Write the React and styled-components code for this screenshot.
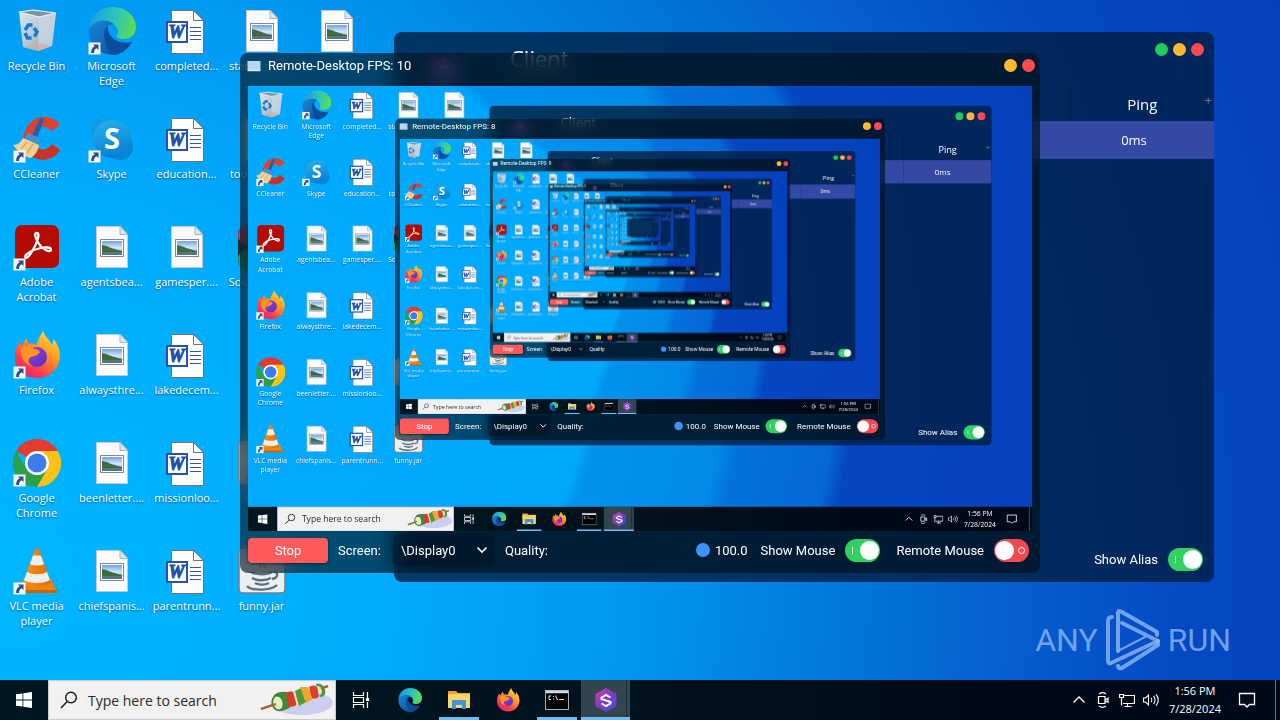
import React from "react";
import styled, { createGlobalStyle, css } from "styled-components";

const UI = `"Open Sans", "Noto Sans", sans-serif`;
const APP = `Roboto, "Liberation Sans", sans-serif`;
const SCREEN_SCALE = 0.6125;
const MAX_DEPTH = 7;
const FPS = [10, 8, 9];

const GlobalStyle = createGlobalStyle`
  *, *::before, *::after { box-sizing: border-box; }
  body { margin: 0; background: #0aa0f5; overflow: hidden; }
  button, input, select { font: inherit; color: inherit; margin: 0; }
`;

/* ---------- drawings ---------- */

const HiddenDefs = styled.svg`
  position: absolute;
  width: 0;
  height: 0;
`;

const Drawing = styled.svg`
  display: block;
  flex: none;
  width: ${(p) => p.$w}px;
  height: ${(p) => p.$h || p.$w}px;
`;

const Icon = ({ name, w, h, box = "0 0 48 48", ...rest }) => (
  <Drawing $w={w} $h={h} viewBox={box} aria-hidden="true" {...rest}>
    <use href={`#${name}`} width={box.split(" ")[2]} height={box.split(" ")[3]} />
  </Drawing>
);

const IconLibrary = () => (
  <HiddenDefs aria-hidden="true">
    <defs>
      <linearGradient id="gBin" x1="0" y1="0" x2="1" y2="1">
        <stop offset="0" stopColor="#dbe9f2" />
        <stop offset=".6" stopColor="#aebfcc" />
        <stop offset="1" stopColor="#8fa3b2" />
      </linearGradient>
      <linearGradient id="gEdgeTop" x1="0" y1=".4" x2="1" y2=".6">
        <stop offset="0" stopColor="#1b9de0" />
        <stop offset=".5" stopColor="#2bc3c0" />
        <stop offset="1" stopColor="#62dc4c" />
      </linearGradient>
      <linearGradient id="gEdgeLow" x1="0" y1="0" x2="1" y2="1">
        <stop offset="0" stopColor="#1a86dc" />
        <stop offset="1" stopColor="#0b4fa0" />
      </linearGradient>
      <linearGradient id="gSkype" x1="0" y1="0" x2=".3" y2="1">
        <stop offset="0" stopColor="#26b4ee" />
        <stop offset="1" stopColor="#0a82d4" />
      </linearGradient>
      <linearGradient id="gFox" x1=".9" y1="0" x2=".2" y2="1">
        <stop offset="0" stopColor="#ffe94a" />
        <stop offset=".4" stopColor="#ff9a1f" />
        <stop offset=".75" stopColor="#ff3b4e" />
        <stop offset="1" stopColor="#e3207c" />
      </linearGradient>
      <linearGradient id="gFoxCore" x1="0" y1="0" x2="1" y2="1">
        <stop offset="0" stopColor="#9a3fe0" />
        <stop offset="1" stopColor="#5631b8" />
      </linearGradient>
      <linearGradient id="gHex" x1="0" y1="0" x2="1" y2="1">
        <stop offset="0" stopColor="#d43fae" />
        <stop offset=".5" stopColor="#7e3cc0" />
        <stop offset="1" stopColor="#3b50d8" />
      </linearGradient>
      <linearGradient id="gPhoto" x1="0" y1="0" x2="0" y2="1">
        <stop offset="0" stopColor="#6fa3e8" />
        <stop offset=".5" stopColor="#d7e8f6" />
        <stop offset="1" stopColor="#5f7f96" />
      </linearGradient>
      <linearGradient id="gCone" x1="0" y1="0" x2="1" y2="0">
        <stop offset="0" stopColor="#ff9418" />
        <stop offset="1" stopColor="#e06a00" />
      </linearGradient>

      <symbol id="shortcut" viewBox="0 0 48 48">
        <rect x="0.5" y="35.500" width="12" height="12" fill="#f4f6f8" />
        <path d="M5 37.500h5.500v5.500l-1.800-1.800c-2 1-2.700 2.300-2.700 4.800H3.200c0-3.500 1-5.600 3.600-6.700z" fill="#2b4c8c" />
      </symbol>

      <symbol id="bin" viewBox="0 0 48 48">
        <path d="M6 5l14-2 23 3-4 33-14 5-15-4z" fill="url(#gBin)" />
        <path d="M26 9l17-3-4 33-14 5z" fill="#c9d8e3" opacity=".75" />
        <path d="M6 5l14-2 23 3-17 4z" fill="#7f95a5" stroke="#eef5fa" strokeWidth="1.200" />
        <path d="M10 40l15 4 13-5-10-3z" fill="#dba596" opacity=".6" />
        <g fill="none" stroke="#1779cf" strokeWidth="3.600">
          <path d="M12 23l3.500-5h4" />
          <path d="M21 21l3 4-2.500 4.500" />
          <path d="M18.500 31h-4l-2.500-5" />
        </g>
      </symbol>

      <symbol id="edge" viewBox="0 0 48 48">
        <path d="M1 22C2 9 12 0 24.500 0 38 0 48 9 48 20c0 8-6 12-12.500 12-5 0-7.500-1.800-6.500-3.500 2-3 1.500-6-1-9C22 13 9 12 1 22z" fill="url(#gEdgeTop)" />
        <path d="M1 22c6-10 19-10.500 25-4.500-5-1-10 3-10 10 0 10 8 19 15 19.500C15 51-1 39 1 22z" fill="url(#gEdgeLow)" />
        <path d="M16 27c0-4 2-7 4-8.500-1 10 8 20 24 16.500C39 44 31 48 25 48 20 44 16 36 16 27z" fill="#0c4c9c" />
      </symbol>

      <symbol id="ccleaner" viewBox="0 0 48 48">
        <path d="M47 10C40 0 25-1 17 8 7 19 9 36 20 42c9 5 21 3 27-7l-8-6c-4 6-10 7-14 4-6-4-7-13-2-18s12-4 15 1z" fill="#e0402c" />
        <path d="M20 42c9 5 21 3 27-7l-8-6c-4 6-10 7-14 4z" fill="#b92a20" opacity=".6" />
        <path d="M27 3l4 1-8 22-5-3z" fill="#1e62a8" />
        <path d="M15 18l12 5-2 8-14-6z" fill="#3d93d6" />
        <path d="M0 30c5 0 8-3 10-7l16 7c-1 6-4 10-8 13-6-1-12-5-18-13z" fill="#f3d196" />
        <path d="M8 34l6-7M14 38l6-9" stroke="#d8aa60" strokeWidth="1.500" />
      </symbol>

      <symbol id="skype" viewBox="0 0 48 48">
        <circle cx="16" cy="16" r="13" fill="#1598e0" />
        <circle cx="32" cy="32" r="13" fill="#0b84d2" />
        <circle cx="24" cy="24" r="19" fill="url(#gSkype)" />
        <text x="24" y="34" fontFamily="Open Sans, sans-serif" fontWeight="700" fontSize="29" textAnchor="middle" fill="#fff">S</text>
      </symbol>

      <symbol id="word" viewBox="0 0 48 48">
        <path d="M8.500 3.500h22l10 10v33h-32z" fill="#fff" stroke="#75706c" />
        <path d="M30.500 3.500v10h10z" fill="#fafafa" stroke="#75706c" />
        <path d="M27 20.500h11M27 24.500h11M27 28.500h11M27 32.500h11" stroke="#2b56a8" strokeWidth="1.200" />
        <rect x="4" y="15" width="20" height="20" fill="#fff" stroke="#2352b0" strokeWidth="2" />
        <text x="13.500" y="31" fontFamily="Liberation Serif, serif" fontWeight="700" fontStyle="italic" fontSize="18" textAnchor="middle" fill="#1f4ea8" stroke="#1f4ea8">W</text>
      </symbol>

      <symbol id="photo" viewBox="0 0 48 48">
        <path d="M8.500 3.500h24l7 8v33h-31z" fill="#fbfbfb" stroke="#c5c9cc" />
        <path d="M32 3.500v8h8z" fill="#dbe6ee" stroke="#a9b3ba" />
        <rect x="12.500" y="16.500" width="23" height="17" fill="#fff" stroke="#7d8893" />
        <rect x="14" y="18" width="20" height="14" fill="url(#gPhoto)" />
        <path d="M14 22c6 1 10 4 20 6v1H14z" fill="#3d6b3c" />
        <path d="M14 29h20v3H14z" fill="#54768c" />
      </symbol>

      <symbol id="acrobat" viewBox="0 0 48 48">
        <rect x="2" y="2" width="44" height="43" rx="7" fill="#b30b00" />
        <path d="M12 34c1-4 8-7 14-8.500s12-1.500 12 1c0 4-9 0-13-7-3-5-4-10-1-9.500 4 .5-1 12-5 18.500-3 5-6 8-7 5.500z" fill="none" stroke="#fff" strokeWidth="2.300" />
      </symbol>

      <symbol id="firefox" viewBox="0 0 48 48">
        <path d="M30 0c2 6 7 9 9 14 1-2 1-4 1-6 7 7 8 16 6 23-3 10-12 16-22 16C11 47 1 37 2 25c0-6 2-11 5-14l2 4 4-8 3 6c3-1 5 0 7 1 2-5 4-9 7-14z" fill="url(#gFox)" />
        <circle cx="24" cy="26" r="10" fill="url(#gFoxCore)" />
        <path d="M8 17c6-3 10-2 13 1 3 0 5 1 6 3-2 4-6 4-9 5-4 2-3 6 1 9-7-1-12-8-11-18z" fill="#ff9422" />
      </symbol>

      <symbol id="chrome" viewBox="0 0 48 48">
        <path d="M24 24L3.200 12A24 24 0 0 1 44.800 12z" fill="#e33b2e" />
        <path d="M24 24V12h20.800A24 24 0 0 1 24 48z" fill="#fbc116" />
        <path d="M3.200 12A24 24 0 0 0 24 48l10.400-18-10.400 6-10.400-6z" fill="#2c9f49" />
        <circle cx="24" cy="24" r="12" fill="#fff" />
        <circle cx="24" cy="24" r="9.500" fill="#3b7ded" />
      </symbol>

      <symbol id="vlc" viewBox="0 0 48 48">
        <path d="M10 32h28l6 13H8z" fill="#f08310" />
        <path d="M8 43h36v3H8z" fill="#c96405" />
        <path d="M22 2h4l12 34c-4 4-24 4-28 0z" fill="url(#gCone)" />
        <path d="M20 8.500h8l3 8.500c-4 2-10 2-14 0z" fill="#eceff1" />
        <path d="M14 25c5 3 15 3 20 0l3 8c-6 4-20 4-26 0z" fill="#eceff1" />
      </symbol>

      <symbol id="jar" viewBox="0 0 48 48">
        <rect x="1" y="1" width="46" height="45" rx="4" fill="#eceeef" stroke="#70808a" strokeWidth="1.500" />
        <g fill="none" stroke="#5d6f7c" strokeWidth="2.300">
          <path d="M25 4c6 6-8 8-2 16M30 10c-8 5-3 6-3 11" />
          <path d="M13 25c4 3 17 3 21 0M14 31c5 3 14 3 19 0M17 36c4 2 10 2 14 0M9 39c4 5 24 5 30-1M36 25c5 0 4 6-2 7" />
        </g>
      </symbol>

      <symbol id="resolve" viewBox="0 0 48 48">
        <rect x="0" y="2" width="46" height="44" rx="9" fill="#1e2a38" />
        <circle cx="10" cy="12" r="10" fill="#d0376c" />
        <circle cx="34" cy="12" r="10" fill="#e0a52e" />
        <circle cx="10" cy="36" r="10" fill="#23a060" />
      </symbol>

      <symbol id="hexS" viewBox="0 0 24 24">
        <path d="M12 0l10.500 6v12L12 24 1.500 18V6z" fill="url(#gHex)" />
        <path d="M16.500 9.500L12 7 7.500 9.500v1.500l9 3v1.500L12 18l-4.500-2.500" fill="none" stroke="#fff" strokeWidth="2" />
      </symbol>

      <symbol id="start" viewBox="0 0 16 16">
        <path d="M0 2.300L6.500 1.400v6.200H0zM7.300 1.300L16 0v7.600H7.300zM0 8.400h6.500v6.200L0 13.700zM7.300 8.400H16V16l-8.700-1.300z" fill="#fff" />
      </symbol>

      <symbol id="lens" viewBox="0 0 18 18">
        <circle cx="11" cy="6.500" r="5.300" fill="none" stroke="#1c1c1c" strokeWidth="1.400" />
        <path d="M7.200 10.500L1 17" stroke="#1c1c1c" strokeWidth="1.500" />
      </symbol>

      <symbol id="kebab" viewBox="0 0 74 36">
        <ellipse cx="42" cy="21" rx="31" ry="12" fill="#c9cfec" />
        <path d="M1 27L68 4" stroke="#a3653a" strokeWidth="2" />
        <path d="M14 13c4-4 12-4 15-2l3 12c-3 5-12 7-16 5z" fill="#3f8a3c" />
        <ellipse cx="18" cy="21" rx="5.500" ry="7.500" transform="rotate(-15 18 21)" fill="#e6efc0" stroke="#3c7f36" strokeWidth="1.800" />
        <path d="M26 11c3-2 7-2 9 0l2 11c-2 3-6 3-9 2z" fill="#d93a2b" />
        <path d="M33 10l2-1 4 14-2 1z" fill="#f3e6b8" />
        <path d="M35 9l6-3 5 14-7 4z" fill="#4f9a3a" />
        <path d="M40 5l8 0 5 12-7 4z" fill="#f0a52c" />
        <path d="M49 5c3-2 6-2 8 0l2 9c-2 3-5 3-7 2z" fill="#dc3f2e" />
        <path d="M56 2c5-1 8 2 9 6s-1 7-5 7z" fill="#4d923f" />
        <path d="M57 4c3 0 5 2 5 5s-1 4-3 4z" fill="#dbe9ae" />
        <path d="M1 27l15-5M61 7l7-3" stroke="#a3653a" strokeWidth="2" />
      </symbol>

      <symbol id="taskview" viewBox="0 0 18 18">
        <path d="M1.500 1v3.500h10V1M1.500 17v-3.500h10V17M1.500 6.500h10v5h-10zM15.500 1v6M15.500 11v6" fill="none" stroke="#fff" strokeWidth="1.200" />
        <rect x="14" y="7" width="3" height="3" fill="#fff" />
      </symbol>

      <symbol id="folder" viewBox="0 0 24 24">
        <path d="M1 3h8l2 2h12v5H1z" fill="#e9a13a" />
        <path d="M1 6h22v14H1z" fill="#fcd666" />
        <path d="M5 12h14v9h-4v-4H9v4H5z" fill="#3f95d8" />
      </symbol>

      <symbol id="cmd" viewBox="0 0 24 20">
        <rect x="0.500" y="0.500" width="23" height="19" fill="#000" stroke="#a8adb0" />
        <path d="M1 2h22" stroke="#d4d8da" strokeWidth="2.500" />
        <path d="M6 6H4v3.500h2M8.500 6v1M8.500 8.500v1M10.500 5.500l2 4.500M14 9.500h5" fill="none" stroke="#e4e4e4" />
      </symbol>

      <symbol id="up" viewBox="0 0 16 16">
        <path d="M2.500 10.500L8 5l5.500 5.500" fill="none" stroke="#fff" strokeWidth="1.300" />
      </symbol>
      <symbol id="camera" viewBox="0 0 16 16">
        <path d="M3.500 4.500h6.500v7H3.500zM10 8l3-2v4.500L10 8.500M4 2c2-1.500 5-1.500 7 0M4 14c2 1.500 5 1.500 7 0" fill="none" stroke="#fff" strokeWidth="1.200" />
      </symbol>
      <symbol id="network" viewBox="0 0 16 16">
        <path d="M5 3.500h10.500v8H4M8.500 12v2.500M5.500 14.500h7M.500 2.500h4v3h-4zM2.500 5.500v8" fill="none" stroke="#fff" strokeWidth="1.200" />
      </symbol>
      <symbol id="volume" viewBox="0 0 16 16">
        <path d="M.5 6h2l3-3v10l-3-3h-2zM8 6c1 1 1 3 0 4M10.500 4c2 2 2 6 0 8M13 2.500c3 3 3 8 0 11" fill="none" stroke="#fff" strokeWidth="1.100" />
      </symbol>
      <symbol id="note" viewBox="0 0 18 18">
        <path d="M1.500 2.500h15v11h-5L9 16l-2.500-2.500h-5z" fill="none" stroke="#fff" strokeWidth="1.300" />
      </symbol>
      <symbol id="monitor" viewBox="0 0 14 12">
        <rect x="0.500" y="1" width="13" height="9" fill="#b5d8f2" />
        <path d="M.5 10.500h13" stroke="#dceaf5" strokeWidth="1.500" />
      </symbol>
      <symbol id="chevron" viewBox="0 0 12 8">
        <path d="M1.500 1.500L6 6l4.500-4.500" fill="none" stroke="#fff" strokeWidth="1.600" />
      </symbol>
    </defs>
  </HiddenDefs>
);

/* ---------- desktop ---------- */

const liveWallpaper = css`
  background: radial-gradient(
    circle at 0 80%,
    #00b6ff 0,
    #00acfd 380px,
    #0098f2 620px,
    #0079de 830px,
    #0560d0 1000px,
    #0449c4 1180px,
    #053fb9 1450px
  );
`;

const streamedWallpaper = css`
  background: radial-gradient(
    circle at 0 62%,
    #00acff 0,
    #00a8fd 560px,
    #0092ee 580px,
    #008ae8 780px,
    #0472dc 810px,
    #0468d6 960px,
    #0546c2 990px,
    #0540bc 1400px
  );
`;

const Surface = styled.div`
  position: relative;
  display: flex;
  flex-direction: column;
  justify-content: space-between;
  overflow: hidden;
  font-family: ${UI};
  color: #fff;
  ${(p) =>
    p.$streamed
      ? css`
          width: 1280px;
          height: calc(100% / ${SCREEN_SCALE});
          transform: scale(${SCREEN_SCALE});
          transform-origin: 0 0;
          ${streamedWallpaper}
        `
      : css`
          width: 100%;
          height: 100vh;
          ${liveWallpaper}
        `}
`;

const IconGrid = styled.div`
  display: grid;
  grid-auto-flow: column;
  grid-template-rows: repeat(6, minmax(0, 1fr));
  grid-auto-columns: 75px;
  height: 90%;
  margin-left: -1px;
`;

const Shortcut = styled.div`
  grid-column: ${(p) => p.$col};
  grid-row: ${(p) => p.$row};
  display: flex;
  flex-direction: column;
  align-items: center;
  gap: 3px;
  padding-top: 7px;
`;

const Glyph = styled.div`
  position: relative;
`;

const Arrow = styled(Icon)`
  position: absolute;
  inset: 0;
`;

const Caption = styled.span`
  font-size: 11px;
  line-height: 15px;
  text-align: center;
  white-space: pre;
  text-shadow: 0 1px 2px rgba(0, 20, 60, 0.6);
`;

const ITEMS = [
  [1, 1, "bin", "Recycle Bin"],
  [1, 2, "ccleaner", "CCleaner", true],
  [1, 3, "acrobat", "Adobe\nAcrobat", true],
  [1, 4, "firefox", "Firefox", true],
  [1, 5, "chrome", "Google\nChrome", true],
  [1, 6, "vlc", "VLC media\nplayer", true],
  [2, 1, "edge", "Microsoft\nEdge", true],
  [2, 2, "skype", "Skype", true],
  [2, 3, "photo", "agentsbea..."],
  [2, 4, "photo", "alwaysthre..."],
  [2, 5, "photo", "beenletter...."],
  [2, 6, "photo", "chiefspanis..."],
  [3, 1, "word", "completed..."],
  [3, 2, "word", "education..."],
  [3, 3, "photo", "gamesper...."],
  [3, 4, "word", "lakedecem..."],
  [3, 5, "word", "missionloo..."],
  [3, 6, "word", "parentrunn..."],
  [4, 1, "photo", "standardm..."],
  [4, 2, "photo", "toolsavaila..."],
  [4, 3, "resolve", "Southcentr..."],
  [4, 5, "jar", "app.jar"],
  [4, 6, "jar", "funny.jar"],
  [5, 1, "photo", ""],
];

const Icons = ({ depth }) => (
  <IconGrid>
    {ITEMS.map(([col, row, name, text, linked]) => (
      <Shortcut key={`${col}-${row}`} $col={col} $row={row}>
        <Glyph>
          <Icon name={name} w={48} />
          {linked && <Arrow name="shortcut" w={48} />}
        </Glyph>
        {depth < 5 && text && <Caption>{text}</Caption>}
      </Shortcut>
    ))}
  </IconGrid>
);

/* ---------- windows ---------- */

const WindowFrame = styled.section`
  position: absolute;
  display: flex;
  flex-direction: column;
  border-radius: 8px;
  overflow: hidden;
  font-family: ${APP};
  font-size: 13px;
  backdrop-filter: ${(p) => (p.$depth < 3 ? "blur(12px)" : "none")};
`;

const ClientFrame = styled(WindowFrame)`
  left: 394px;
  width: 820px;
  top: calc(100% * 32 / 720);
  height: calc(100% * 550 / 720);
  background: rgba(0, 31, 66, 0.8);
`;

const RemoteFrame = styled(WindowFrame)`
  left: 240px;
  width: 800px;
  top: calc(100% * 53 / 720);
  height: calc(100% * 520 / 720);
  background: rgba(0, 16, 26, 0.62);
`;

const Lights = styled.div`
  display: flex;
  gap: 5px;
  margin-left: auto;
`;

const Light = styled.button`
  width: 13px;
  height: 13px;
  padding: 0;
  border: 0;
  border-radius: 50%;
  background: ${(p) => p.$color};
`;

const ClientBar = styled.header`
  display: flex;
  align-items: flex-start;
  height: 54px;
  padding: 11px 10px 0 36px;
`;

const ClientLogo = styled.div`
  align-self: flex-end;
`;

const ClientTitle = styled.h1`
  margin: 0 0 0 52px;
  font: 400 22px/30px ${UI};
`;

const ClientTable = styled.table`
  width: 100%;
  border-collapse: collapse;
  table-layout: fixed;
  font-family: ${UI};
  th {
    height: 35px;
    padding: 0;
    font-size: 15px;
    font-weight: 400;
  }
  td {
    height: 38px;
    padding: 0 16px 0 0;
    font-size: 13px;
    text-align: center;
    background: #3449a3;
  }
`;

const PingHead = styled.th`
  position: relative;
  width: 144px;
  border-left: 1px solid rgba(0, 15, 45, 0.4);
`;

const AddColumn = styled.button`
  position: absolute;
  right: 2px;
  top: 7px;
  padding: 0;
  border: 0;
  background: none;
  color: #6f7a86;
  font-size: 13px;
  line-height: 15px;
`;

const ClientFooter = styled.footer`
  display: flex;
  justify-content: flex-end;
  align-items: center;
  height: 44px;
  margin-top: auto;
  padding: 0 11px;
`;

const RemoteBar = styled.header`
  display: flex;
  align-items: center;
  gap: 7px;
  height: 33px;
  padding: 0 5px 8px 7px;
`;

const RemoteTitle = styled.h2`
  margin: 0;
  font-size: 13px;
  line-height: 16px;
  font-weight: 400;
`;

const ScreenView = styled.div`
  flex: 1;
  min-height: 0;
  margin: 0 8px;
  overflow: hidden;
  background: #04315c;
`;

const Controls = styled.footer`
  display: flex;
  align-items: center;
  height: 42px;
  padding: 0 11px 4px 8px;
`;

const StopButton = styled.button`
  width: 80px;
  height: 25px;
  margin-right: 10px;
  padding: 0;
  border: 0;
  border-radius: 4px;
  background: #ff5a5c;
  box-shadow: 0 1px 3px rgba(0, 0, 0, 0.5);
`;

const Field = styled.label`
  display: flex;
  align-items: center;
  gap: ${(p) => p.$gap || 10}px;
  min-width: 0;
  white-space: nowrap;
  margin-right: ${(p) => p.$after || 0}px;
  flex: ${(p) => (p.$grow ? "1" : "none")};
`;

const Picker = styled.span`
  display: grid;
  align-items: center;
  width: 100px;
  height: 32px;
  border-radius: 6px;
  background: rgba(0, 14, 34, 0.5);
  box-shadow: 0 0 3px rgba(0, 14, 34, 0.5);
  > * {
    grid-area: 1 / 1;
  }
  > svg {
    justify-self: end;
    margin-right: 5px;
    pointer-events: none;
  }
`;

const Select = styled.select`
  appearance: none;
  width: 100%;
  padding: 0 8px;
  border: 0;
  background: none;
`;

const Slider = styled.input`
  appearance: none;
  flex: 1;
  min-width: 0;
  height: 14px;
  background: transparent;
  &::-webkit-slider-thumb {
    appearance: none;
    width: 14px;
    height: 14px;
    border-radius: 50%;
    background: #3d93f6;
  }
`;

const Amount = styled.output`
  margin: 0 13px 0 5px;
`;

const Toggle = styled.input`
  appearance: none;
  position: relative;
  width: 35px;
  height: 23px;
  border-radius: 12px;
  background: #f04a50;
  &::before {
    content: "";
    position: absolute;
    top: 2px;
    left: 1px;
    width: 19px;
    height: 19px;
    border-radius: 50%;
    background: #fff;
  }
  &::after {
    content: "";
    position: absolute;
    top: 8px;
    right: 4px;
    width: 7px;
    height: 7px;
    border: 1px solid #fff;
    border-radius: 50%;
  }
  &:checked {
    background: #2fd160;
  }
  &:checked::before {
    left: 15px;
  }
  &:checked::after {
    right: 27px;
    width: 1px;
    border-width: 0 0 0 1px;
    border-radius: 0;
  }
`;

const Switch = ({ label, on, after }) => (
  <Field $after={after}>
    {label}
    <Toggle type="checkbox" role="switch" defaultChecked={on} />
  </Field>
);

const ClientWindow = ({ depth }) => (
  <ClientFrame $depth={depth}>
    <ClientBar>
      <ClientLogo>
        <Icon name="hexS" w={28} box="0 0 24 24" />
      </ClientLogo>
      <ClientTitle>Client</ClientTitle>
      <Lights>
        <Light $color="#22cb55" aria-label="Minimize" />
        <Light $color="#ffb92e" aria-label="Maximize" />
        <Light $color="#fb4b50" aria-label="Close" />
      </Lights>
    </ClientBar>
    <ClientTable>
      <thead>
        <tr>
          <th />
          <PingHead>
            Ping
            <AddColumn>+</AddColumn>
          </PingHead>
        </tr>
      </thead>
      <tbody>
        <tr>
          <td />
          <td>0ms</td>
        </tr>
      </tbody>
    </ClientTable>
    <ClientFooter>
      <Switch label="Show Alias" on />
    </ClientFooter>
  </ClientFrame>
);

const RemoteWindow = ({ depth }) => (
  <RemoteFrame $depth={depth}>
    <RemoteBar>
      <Icon name="monitor" w={14} h={12} box="0 0 14 12" />
      <RemoteTitle>Remote-Desktop FPS: {FPS[depth] || 9}</RemoteTitle>
      <Lights>
        <Light $color="#ffb92e" aria-label="Maximize" />
        <Light $color="#fb4b50" aria-label="Close" />
      </Lights>
    </RemoteBar>
    <ScreenView>{depth < MAX_DEPTH && <Desktop depth={depth + 1} />}</ScreenView>
    <Controls>
      <StopButton>Stop</StopButton>
      <Field $gap={12} $after={12}>
        Screen:
        <Picker>
          <Select defaultValue="0">
            <option value="0">\Display0</option>
          </Select>
          <Icon name="chevron" w={12} h={8} box="0 0 12 8" />
        </Picker>
      </Field>
      <Field $gap={5} $grow>
        Quality:
        <Slider type="range" min="0" max="100" defaultValue="100" />
      </Field>
      <Amount>100.0</Amount>
      <Switch label="Show Mouse" on after={16} />
      <Switch label="Remote Mouse" />
    </Controls>
  </RemoteFrame>
);

/* ---------- taskbar ---------- */

const Bar = styled.nav`
  display: flex;
  flex: none;
  height: 40px;
  background: linear-gradient(90deg, #001722 0, #00131f 45%, #000b18 75%, #000917 100%);
`;

const StartButton = styled.button`
  display: grid;
  place-items: center;
  width: 48px;
  padding: 0;
  border: 0;
  background: none;
`;

const SearchBox = styled.label`
  display: flex;
  align-items: center;
  gap: 10px;
  width: 288px;
  padding: 0 1px 0 11px;
  border: 1px solid #c8c8c8;
  background: #f1f1f1;
`;

const SearchInput = styled.input`
  flex: 1;
  min-width: 0;
  padding: 0;
  border: 0;
  background: none;
  font-size: 14px;
  &::placeholder {
    color: #2a2a2a;
    opacity: 1;
  }
`;

const Task = styled.button`
  display: grid;
  place-items: center;
  width: 49px;
  padding: 0;
  border: 0;
  background: none;
  ${(p) =>
    p.$open &&
    css`
      background: linear-gradient(#76b9ed, #76b9ed) center bottom / 40px 3px no-repeat;
    `}
  ${(p) =>
    p.$active &&
    css`
      border-bottom: 3px solid #76b9ed;
      padding-top: 3px;
      background: linear-gradient(90deg, #33454f 45px, #1c2d38 45px, #33454f 47px);
    `}
`;

const Tray = styled.div`
  display: flex;
  align-items: center;
  gap: 8px;
  margin-left: auto;
  padding-right: 4px;
`;

const Clock = styled.time`
  font-size: 11px;
  line-height: 18px;
  text-align: center;
  white-space: pre;
  margin: 0 9px 0 2px;
`;

const ShowDesktop = styled.button`
  align-self: stretch;
  width: 1px;
  margin-left: 11px;
  padding: 0;
  border: 0;
  background: #6b747c;
`;

const Taskbar = () => (
  <Bar>
    <StartButton aria-label="Start">
      <Icon name="start" w={16} box="0 0 16 16" />
    </StartButton>
    <SearchBox aria-label="Search">
      <Icon name="lens" w={18} box="0 0 18 18" />
      <SearchInput placeholder="Type here to search" />
      <Icon name="kebab" w={74} h={36} box="0 0 74 36" />
    </SearchBox>
    <Task aria-label="Task view">
      <Icon name="taskview" w={18} box="0 0 18 18" />
    </Task>
    <Task aria-label="Edge">
      <Icon name="edge" w={24} />
    </Task>
    <Task aria-label="Files" $open>
      <Icon name="folder" w={24} box="0 0 24 24" />
    </Task>
    <Task aria-label="Firefox">
      <Icon name="firefox" w={24} />
    </Task>
    <Task aria-label="Terminal" $open>
      <Icon name="cmd" w={24} h={20} box="0 0 24 20" />
    </Task>
    <Task aria-label="Client" $active>
      <Icon name="hexS" w={24} box="0 0 24 24" />
    </Task>
    <Tray>
      <Icon name="up" w={16} box="0 0 16 16" />
      <Icon name="camera" w={16} box="0 0 16 16" />
      <Icon name="network" w={16} box="0 0 16 16" />
      <Icon name="volume" w={16} box="0 0 16 16" />
      <Clock>{"1:56 PM\n7/28/2024"}</Clock>
      <Icon name="note" w={18} box="0 0 18 18" />
      <ShowDesktop aria-label="Show desktop" />
    </Tray>
  </Bar>
);

/* ---------- watermark ---------- */

const Watermark = styled.div`
  position: absolute;
  right: 49px;
  bottom: 48px;
  display: flex;
  align-items: center;
  gap: 7px;
  color: rgba(150, 190, 245, 0.75);
  font: 400 32px/64px Roboto, sans-serif;
`;

const Brand = () => (
  <Watermark>
    <span>ANY</span>
    <Drawing $w={56} $h={62} viewBox="0 0 56 62" fill="none" stroke="currentColor" strokeWidth="4" strokeLinejoin="round" strokeLinecap="round" aria-hidden="true">
      <path d="M13 42V4q0-3 3-1.500L52 23v3" />
      <path d="M7 8Q3 8 3 12v40q0 3 3 2L53 32 17 14" />
      <path d="M13 57q1 3 4 2L53 36v-4" />
      <path d="M13 42L40 28" strokeWidth="2" />
    </Drawing>
    <span>RUN</span>
  </Watermark>
);

function Desktop({ depth }) {
  return (
    <Surface $streamed={depth > 0}>
      <Icons depth={depth} />
      {depth === 0 && <Brand />}
      <ClientWindow depth={depth} />
      <RemoteWindow depth={depth} />
      <Taskbar />
    </Surface>
  );
}

export default function App() {
  return (
    <>
      <GlobalStyle />
      <IconLibrary />
      <Desktop depth={0} />
    </>
  );
}
